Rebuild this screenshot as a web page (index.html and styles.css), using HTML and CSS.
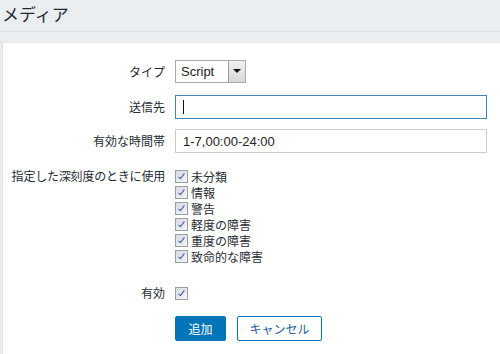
FILE: index.html
```html
<!DOCTYPE html>
<html lang="ja">
<head>
    <meta charset="UTF-8">
    <meta name="viewport" content="width=device-width, initial-scale=1.0">
    <title>メディア</title>
    <link rel="stylesheet" href="styles.css">
</head>
<body>
    <header class="page-header">
        <h1>メディア</h1>
    </header>
    <div class="sub-bar"></div>

    <main class="panel">
        <div class="form-row row-type">
            <span class="form-label">タイプ</span>
            <div class="select-box">
                <span class="select-value">Script</span>
                <span class="select-arrow"></span>
            </div>
        </div>

        <div class="form-row row-sendto">
            <span class="form-label">送信先</span>
            <div class="text-box focused"><span class="caret"></span></div>
        </div>

        <div class="form-row row-period">
            <span class="form-label">有効な時間帯</span>
            <div class="text-box">1-7,00:00-24:00</div>
        </div>

        <div class="form-row row-severity">
            <span class="form-label">指定した深刻度のときに使用</span>
            <ul class="check-list">
                <li><span class="check"></span>未分類</li>
                <li><span class="check"></span>情報</li>
                <li><span class="check"></span>警告</li>
                <li><span class="check"></span>軽度の障害</li>
                <li><span class="check"></span>重度の障害</li>
                <li><span class="check"></span>致命的な障害</li>
            </ul>
        </div>

        <div class="form-row row-enabled">
            <span class="form-label">有効</span>
            <div class="check-item"><span class="check"></span></div>
        </div>

        <div class="form-row row-buttons">
            <span></span>
            <div class="buttons">
                <button class="btn btn-primary">追加</button>
                <button class="btn btn-secondary">キャンセル</button>
            </div>
        </div>
    </main>
</body>
</html>
```

FILE: styles.css
```css
body {
    margin: 0;
    background-color: #ebeef0;
    font-family: "Liberation Sans", "Noto Sans CJK JP", sans-serif;
    font-size: 12px;
    color: #1f2c33;
}
.page-header {
    height: 31px;
    border-bottom: 1px solid #dde1e4;
    padding-left: 2px;
}
.page-header h1 {
    margin: 0;
    font-family: "Noto Sans CJK JP", sans-serif;
    font-weight: normal;
    font-size: 17px;
    line-height: 27px;
}
.sub-bar {
    height: 10px;
    border-bottom: 1px solid #e2e5e8;
}
.panel {
    box-sizing: border-box;
    height: calc(100vh - 43px);
    margin-left: 2px;
    border-left: 1px solid #dde1e4;
    background-color: #fff;
    padding: 17px 13px 0 0;
}
.form-row {
    display: grid;
    grid-template-columns: 162px 1fr;
    column-gap: 10px;
    align-items: center;
}
.form-label {
    text-align: right;
    font-family: "Noto Sans CJK JP", sans-serif;
    line-height: 16px;
}
.row-severity .form-label {
    letter-spacing: -0.2px;
}
.row-type { margin-bottom: 12px; }
.row-sendto { margin-bottom: 10px; }
.row-period { margin-bottom: 15px; }
.row-severity {
    align-items: start;
    margin-bottom: 21px;
}
.row-enabled { margin-bottom: 15px; }

/* select */
.select-box {
    box-sizing: border-box;
    width: 71px;
    height: 23px;
    border: 1px solid #a9a9a9;
    display: flex;
    align-items: center;
    justify-content: space-between;
    font-size: 13px;
    color: #222;
}
.select-value {
    padding-left: 5px;
}
.select-arrow {
    box-sizing: border-box;
    width: 17px;
    height: 21px;
    border-left: 1px solid #9a9a9a;
    background: linear-gradient(#f0f0f0, #d8d8d8);
    position: relative;
}
.select-arrow::after {
    content: "";
    position: absolute;
    left: 4px;
    top: 8px;
    border-left: 4px solid transparent;
    border-right: 4px solid transparent;
    border-top: 4px solid #111;
}

/* text inputs */
.text-box {
    box-sizing: border-box;
    height: 24px;
    border: 1px solid #cbcbcb;
    padding: 0 7px;
    display: flex;
    align-items: center;
    font-size: 13px;
    color: #222;
}
.text-box.focused {
    border-color: #3f86bd;
}
.caret {
    width: 1px;
    height: 14px;
    background-color: #111;
}

/* checkboxes */
.check-list {
    list-style: none;
    margin: 0;
    padding: 0;
}
.check-list li,
.check-item {
    display: flex;
    align-items: center;
    height: 16px;
    font-family: "Noto Sans CJK JP", sans-serif;
}
.check {
    box-sizing: border-box;
    width: 13px;
    height: 13px;
    margin-right: 3px;
    border: 1px solid #9a9ca3;
    background: linear-gradient(135deg, #d6d9e4, #f7f8fb);
    position: relative;
}
.check::after {
    content: "";
    position: absolute;
    left: 4px;
    top: 1px;
    width: 2px;
    height: 6px;
    border-right: 1.5px solid #3f569a;
    border-bottom: 1.5px solid #3f569a;
    transform: rotate(38deg);
}

/* buttons */
.buttons {
    display: flex;
    gap: 11px;
}
.btn {
    box-sizing: border-box;
    height: 25px;
    border-radius: 2px;
    font-family: "Noto Sans CJK JP", sans-serif;
    font-size: 12px;
    padding: 0;
    cursor: pointer;
}
.btn-primary {
    width: 51px;
    border: 1px solid #0275b8;
    background-color: #0275b8;
    color: #fff;
}
.btn-secondary {
    width: 85px;
    border: 1px solid #0275b8;
    background-color: #fff;
    color: #1f5f99;
}
```
